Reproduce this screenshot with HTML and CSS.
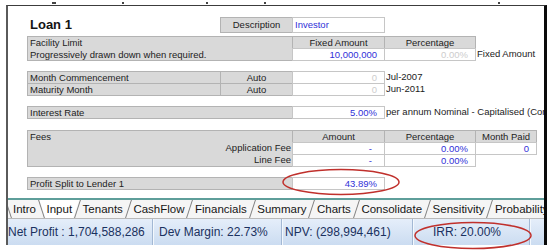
FILE: index.html
```html
<!DOCTYPE html>
<html>
<head>
<meta charset="utf-8">
<link rel="stylesheet" href="styles.css">
</head>
<body>
<div class="ticks"><span class="tick t1"></span><span class="tick t2"></span><span class="tick t3"></span><span class="tick t4"></span><span class="tick t5"></span></div>
<div class="window">
  <div class="sheet">
    <div class="block title">
      <div class="loan cA">Loan 1</div>
      <div class="cell grey center cB">Description</div>
      <div class="cell white blue cC">Investor</div>
    </div>

    <div class="block facility">
      <div class="cell grey stack cAB r12"><span>Facility Limit</span><span>Progressively drawn down when required.</span></div>
      <div class="cell grey center cC r1">Fixed Amount</div>
      <div class="cell grey center cD r1">Percentage</div>
      <div class="cell white blue right cC r2">10,000,000</div>
      <div class="cell white pale right cD r2">0.00%</div>
      <div class="plain cE r2">Fixed Amount</div>
    </div>

    <div class="block month">
      <div class="cell grey cA r1">Month Commencement</div>
      <div class="cell grey center cB r1">Auto</div>
      <div class="cell white pale right cC r1">0</div>
      <div class="plain cD r1">Jul-2007</div>
      <div class="cell grey cA r2">Maturity Month</div>
      <div class="cell grey center cB r2">Auto</div>
      <div class="cell white pale right cC r2">0</div>
      <div class="plain cD r2">Jun-2011</div>
    </div>

    <div class="block interest">
      <div class="cell grey cAB r1">Interest Rate</div>
      <div class="cell white blue right cC r1">5.00%</div>
      <div class="plain cRest r1">per annum Nominal - Capitalised (Compounding)</div>
    </div>

    <div class="block fees">
      <div class="cell grey top cAB r13">Fees</div>
      <div class="plain right-label cAB r2">Application Fee</div>
      <div class="plain right-label cAB r3">Line Fee</div>
      <div class="cell grey center cC r1">Amount</div>
      <div class="cell grey center cD r1">Percentage</div>
      <div class="cell grey center cE r1">Month Paid</div>
      <div class="cell white blue right dash cC r2">-</div>
      <div class="cell white blue right cD r2">0.00%</div>
      <div class="cell white blue right cE r2">0</div>
      <div class="cell white blue right dash cC r3">-</div>
      <div class="cell white blue right cD r3">0.00%</div>
    </div>

    <div class="block profit">
      <div class="cell grey cAB r1">Profit Split to Lender 1</div>
      <div class="cell white blue right cC r1">43.89%</div>
    </div>
  </div>

  <div class="tabs">
    <span class="sep back"></span>
    <span class="tab">Intro</span>
    <span class="sep back"></span>
    <span class="tab active">Input</span>
    <span class="sep"></span>
    <span class="tab">Tenants</span>
    <span class="sep"></span>
    <span class="tab">CashFlow</span>
    <span class="sep"></span>
    <span class="tab">Financials</span>
    <span class="sep"></span>
    <span class="tab">Summary</span>
    <span class="sep"></span>
    <span class="tab">Charts</span>
    <span class="sep"></span>
    <span class="tab">Consolidate</span>
    <span class="sep"></span>
    <span class="tab">Sensitivity</span>
    <span class="sep"></span>
    <span class="tab">Probability</span>
  </div>

  <div class="status">
    <div class="panel p1">Net Profit : 1,704,588,286</div>
    <div class="panel p2">Dev Margin: 22.73%</div>
    <div class="panel p3">NPV: (298,994,461)</div>
    <div class="panel p4">IRR: 20.00%</div>
    <div class="panel p5"></div>
  </div>
</div>

<svg class="marks" width="552" height="250" viewBox="0 0 552 250">
  <ellipse cx="341" cy="182" rx="58" ry="12.5" />
  <ellipse cx="473" cy="235.5" rx="58" ry="13" />
</svg>
</body>
</html>
```

FILE: styles.css
```css
* { box-sizing: border-box; }

html, body {
  margin: 0;
  padding: 0;
  background: #fff;
}

body {
  width: 552px;
  height: 250px;
  overflow: hidden;
  position: relative;
  font-family: "Liberation Sans", Arial, sans-serif;
}

/* column-header remnants above the frame */
.ticks {
  display: grid;
  grid-template-columns: 52px 4px 66px 2px 82px 2px 56px 2px 232px 2px;
  height: 5px;
  align-items: end;
}
.tick { height: 2px; margin-bottom: 1px; background: #444; }
.t1 { grid-column: 2; }
.t2 { grid-column: 4; }
.t3 { grid-column: 6; }
.t4 { grid-column: 8; }
.t5 { grid-column: 10; }

.window {
  margin-left: 6px;
  width: 541px;
  height: 240px;
  border-top: 1px solid #3c3c3c;
  border-left: 2px solid #5a5a5a;
  border-right: 3px solid #0a0a0a;
  display: flex;
  flex-direction: column;
  overflow: hidden;
}

.sheet {
  flex: 1;
  min-height: 0;
  padding-left: 19px;
  display: flex;
  flex-direction: column;
}

.block {
  display: grid;
  grid-template-columns: 193px 72px 92px 91px 61px 1fr;
  grid-auto-rows: 12px;
  font-size: 9.5px;
  color: #222;
}

.title { grid-template-rows: 15px; margin-top: 11px; }
.facility { margin-top: 4px; }
.month, .interest, .profit { margin-top: 11px; }
.fees { margin-top: 12px; }

.cA { grid-column: 1; }
.cB { grid-column: 2; }
.cC { grid-column: 3; }
.cD { grid-column: 4; }
.cE { grid-column: 5; }
.cAB { grid-column: 1 / 3; }
.cRest { grid-column: 4 / -1; }
.r1 { grid-row: 1; }
.r2 { grid-row: 2; }
.r3 { grid-row: 3; }
.r12 { grid-row: 1 / 3; }
.r13 { grid-row: 1 / 4; }

.loan {
  font-size: 13px;
  font-weight: bold;
  color: #141414;
  padding-left: 3px;
  display: flex;
  align-items: center;
}

.cell {
  border: 1px solid #b3b3b3;
  margin: 0 -1px -1px 0;
  display: flex;
  align-items: center;
  padding: 0 2px;
  white-space: nowrap;
  line-height: 10px;
}

.grey { background: #d9d9d9; }
.white { background: #fff; border-color: #c6c6c6; }

.center { justify-content: center; }
.right { justify-content: flex-end; padding-right: 7px; }
.dash { padding-right: 12px; }
.top { align-items: flex-start; padding-top: 1px; }

.stack {
  flex-direction: column;
  align-items: flex-start;
  justify-content: center;
  gap: 2px;
}

.blue { color: #3030d8; }
.pale { color: #cdcdcd; }

.plain {
  display: flex;
  align-items: center;
  padding-left: 2px;
  white-space: nowrap;
  line-height: 10px;
}

.right-label {
  justify-content: flex-end;
  padding-right: 1px;
  padding-left: 0;
}

/* sheet tabs */
.tabs {
  height: 21px;
  flex: none;
  border-top: 2px solid #5e9e9a;
  border-bottom: 1px solid #b9b9b9;
  background: #f5f5f5;
  display: flex;
  align-items: stretch;
  font-size: 11.5px;
  color: #151515;
  white-space: nowrap;
}

.tab {
  display: flex;
  align-items: center;
}

.tab.active {
  background: #fff;
  margin: 0 -7px;
  padding: 0 7px;
  clip-path: polygon(0 0, 100% 0, calc(100% - 6px) 100%, 6px 100%);
}

.sep {
  width: 1px;
  flex: none;
  background: #808080;
  transform: skewX(-18deg);
  margin: 0 4.75px;
  position: relative;
  z-index: 1;
}
.sep.back { transform: skewX(18deg); }
.sep:first-child { margin-left: 0; margin-right: 4px; }

/* status bar */
.status {
  height: 26px;
  flex: none;
  display: flex;
  background: linear-gradient(#e5eefa, #cbdcf1);
  font-size: 12px;
  color: #1a3160;
  white-space: nowrap;
}

.panel {
  display: flex;
  align-items: center;
  border-right: 1px solid #a3b8d4;
  box-shadow: 1px 0 0 #f3f8fd;
}
.p1 { width: 145px; padding-left: 0; }
.p2 { width: 129px; padding-left: 6px; }
.p3 { width: 131px; padding-left: 3px; }
.p4 { width: 117px; padding-left: 20px; }
.p5 { flex: 1; border-right: none; box-shadow: none; }

/* red highlight rings drawn over the page */
.marks {
  position: absolute;
  left: 0;
  top: 0;
  pointer-events: none;
}
.marks ellipse {
  fill: none;
  stroke: #c0302c;
  stroke-width: 1.5;
}
```
